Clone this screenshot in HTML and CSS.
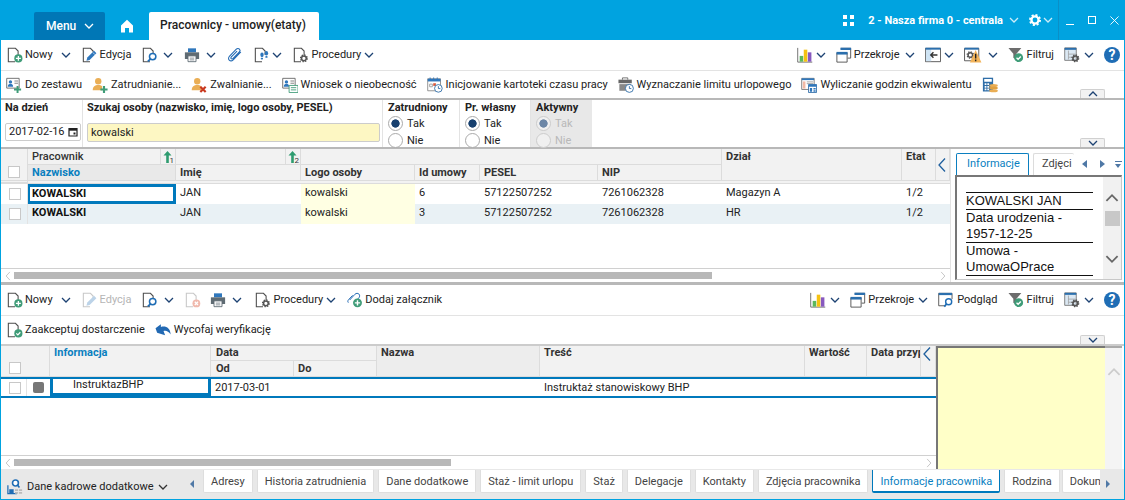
FILE: index.html
```html
<!DOCTYPE html>
<html lang="pl">
<head>
<meta charset="utf-8">
<title>Pracownicy - umowy(etaty)</title>
<link rel="stylesheet" href="styles.css">
</head>
<body>
<svg class="defs" width="0" height="0" aria-hidden="true">
  <symbol id="page" viewBox="0 0 18 18"><path d="M9 16.5H1.5V1.5H9.5L12.5 4.5V9" fill="#fff" stroke="#4d4d4d" stroke-width="1.2"/></symbol>
  <symbol id="gear" viewBox="0 0 18 18"><circle cx="9" cy="9" r="6.4" fill="none" stroke="currentColor" stroke-width="2.6" stroke-dasharray="2.6 2.4"/><circle cx="9" cy="9" r="4.6" fill="none" stroke="currentColor" stroke-width="3"/></symbol>
  <symbol id="i-new" viewBox="0 0 18 18"><use href="#page"/><circle cx="12.8" cy="12.8" r="4.6" fill="#3f9c78"/><path d="M12.8 10v5.6M10 12.8h5.6" stroke="#fff" stroke-width="1.5"/></symbol>
  <symbol id="i-newoff" viewBox="0 0 18 18"><path d="M9 16.5H1.5V1.5H9.5L12.5 4.5V9" fill="#fff" stroke="#c8c8c8" stroke-width="1.2"/><circle cx="12.8" cy="12.8" r="4.4" fill="#f0b9ad"/><path d="M11 11l3.6 3.6M14.6 11L11 14.6" stroke="#fff" stroke-width="1.4"/></symbol>
  <symbol id="i-edit" viewBox="0 0 18 18"><use href="#page"/><path d="M5 15.5l1-3.6 7.6-7.6 2.6 2.6-7.6 7.6z" fill="#2f77bc"/><path d="M12 6l2.6 2.6" stroke="#fff" stroke-width=".7"/></symbol>
  <symbol id="i-editoff" viewBox="0 0 18 18"><path d="M9 16.5H1.5V1.5H9.5L12.5 4.5V9" fill="#fff" stroke="#c8c8c8" stroke-width="1.2"/><path d="M5 15.5l1-3.6 7.6-7.6 2.6 2.6-7.6 7.6z" fill="#bcd3e8"/></symbol>
  <symbol id="i-search" viewBox="0 0 18 18"><use href="#page"/><circle cx="12" cy="10.8" r="3.6" fill="#fff" stroke="#1f6db5" stroke-width="1.7"/><path d="M9.6 13.4L6.6 16.2" stroke="#1f6db5" stroke-width="2"/></symbol>
  <symbol id="i-print" viewBox="0 0 18 18"><path d="M4.5 1.5h9V6h-9z" fill="#2f77bc"/><path d="M1 6h16v7.5H1z" fill="#5f6b73"/><path d="M4.5 10h9v6.5h-9z" fill="#fff" stroke="#5f6b73"/><path d="M6.5 12.5h5M6.5 14.5h5" stroke="#5f6b73" stroke-width=".8"/></symbol>
  <symbol id="i-clip" viewBox="0 0 18 18"><path d="M15.6 5.4L7 14.4c-1.4 1.4-3.4 1.4-4.5.3s-1-3.1.4-4.5l7.6-7.8c1-1 2.6-1 3.5-.1s.9 2.3-.1 3.3L6.6 13c-.6.6-1.4.6-1.9.1s-.4-1.3.2-1.9l6.4-6.6" fill="none" stroke="#2269b3" stroke-width="1.2"/></symbol>
  <symbol id="i-foot" viewBox="0 0 18 18"><use href="#page"/><ellipse cx="9" cy="8.8" rx="1.9" ry="2.6" fill="#2f77bc"/><rect x="7.6" y="12" width="2.6" height="2" rx="1" fill="#2f77bc"/><ellipse cx="14" cy="7" rx="1.9" ry="2.6" fill="#2f77bc"/><rect x="12.7" y="10.2" width="2.6" height="2" rx="1" fill="#2f77bc"/></symbol>
  <symbol id="i-proc" viewBox="0 0 18 18"><use href="#page"/><use href="#gear" x="7" y="7.5" width="10.5" height="10.5" color="#555"/></symbol>
  <symbol id="i-chart" viewBox="0 0 18 18"><path d="M.8 1v16h16.4" fill="none" stroke="#666"/><path d="M3 10h4v6.5H3z" fill="#5cb85c"/><path d="M7.6 3h4v13.5h-4z" fill="#f5c211"/><path d="M12.2 6h4v10.5h-4z" fill="#8759bf"/></symbol>
  <symbol id="i-cube" viewBox="0 0 18 18"><path d="M5.5 1.5h11v11H13" fill="none" stroke="#4d4d4d"/><path d="M5 .8h12v2.6H5z" fill="#2b6fad"/><path d="M1 6.5h11.5V17H1z" fill="#fff" stroke="#4d4d4d"/><path d="M.6 5.5H13v3H.6z" fill="#2b6fad"/></symbol>
  <symbol id="i-back" viewBox="0 0 18 18"><path d="M.5 1.5h17v15H.5z" fill="#fff" stroke="#4d4d4d"/><path d="M1 2h6v14H1z" fill="#cfe4f4"/><path d="M.5 .8h17V3H.5z" fill="#2b6fad"/><path d="M14 9H6.5M9.5 6l-3 3 3 3" fill="none" stroke="#333" stroke-width="1.6"/></symbol>
  <symbol id="i-warn" viewBox="0 0 20 18"><path d="M.5 1.5h16v14H.5z" fill="#fff" stroke="#4d4d4d"/><path d="M.5 .8h16V3H.5z" fill="#2b6fad"/><use href="#gear" x="2" y="4" width="10" height="10" color="#555"/><path d="M13 3.5l6.5 14h-13z" fill="#f3b45a"/><path d="M13 7.5V13M13 14v2" stroke="#222" stroke-width="1.6"/></symbol>
  <symbol id="i-filter" viewBox="0 0 18 18"><path d="M.5 1H15L9.5 7.500v7L6 12V7.500z" fill="#6d6d6d"/><circle cx="12" cy="12" r="5" fill="#3f9c78"/><path d="M9.600 12l1.800 1.800 3-3.200" fill="none" stroke="#fff" stroke-width="1.500"/></symbol>
  <symbol id="i-set" viewBox="0 0 18 18"><path d="M.8 1h13v14H.8z" fill="#dbe8f3" stroke="#777"/><path d="M.8 1h13v2.200H.8z" fill="#2b6fad"/><path d="M5 4v10M5 8h8M5 11.500h8" stroke="#999" stroke-width=".8"/><use href="#gear" x="7.500" y="7.500" width="10.500" height="10.500" color="#555"/></symbol>
  <symbol id="i-card" viewBox="0 0 18 18"><path d="M.8 1.500h14v11H.8z" fill="#fff" stroke="#666"/><circle cx="5" cy="5.500" r="1.900" fill="#2f77bc"/><path d="M2 11c0-2.600 1.300-3.400 3-3.400S8 8.400 8 11z" fill="#2f77bc"/><path d="M9.500 4.500h4M9.500 7h4" stroke="#777"/></symbol>
  <symbol id="i-cardadd" viewBox="0 0 18 18"><use href="#i-card"/><path d="M13 10v8M9 14h8" stroke="#3f9c78" stroke-width="2.200"/></symbol>
  <symbol id="i-cardform" viewBox="0 0 18 18"><use href="#i-card"/><path d="M8 9.500h10v8H8z" fill="#fff" stroke="#3f9c78"/><path d="M10 12h6M10 14.500h6" stroke="#3f9c78"/></symbol>
  <symbol id="i-pers" viewBox="0 0 18 18"><circle cx="7" cy="4.800" r="3.600" fill="#eaae55"/><path d="M.8 15c0-4.500 2.600-6 6.200-6 2 0 3.400.4 4.400 1.300V15z" fill="#eaae55"/></symbol>
  <symbol id="i-persadd" viewBox="0 0 18 18"><use href="#i-pers"/><path d="M13.500 10v8M9.500 14h8" stroke="#3f9c78" stroke-width="2.400"/></symbol>
  <symbol id="i-persdel" viewBox="0 0 18 18"><use href="#i-pers"/><path d="M10.500 11l6 6M16.500 11l-6 6" stroke="#c9391f" stroke-width="2.400"/></symbol>
  <symbol id="i-cal" viewBox="0 0 18 18"><path d="M.8 2h14.400v13.500H.8z" fill="#fff" stroke="#888"/><path d="M.8 2h14.400v3H.8z" fill="#2f77bc"/><path d="M3.500 .5v3M7.500 .5v3M11.500 .5v3" stroke="#2f77bc"/><path d="M3 8h3v3H3z" fill="none" stroke="#999"/><path d="M7 7h3v3H7z" fill="#d9593d"/><circle cx="12.800" cy="12.800" r="4.300" fill="#fff" stroke="#2f6ea8"/><path d="M12.800 10.300v2.700h2.200" fill="none" stroke="#2f6ea8"/></symbol>
  <symbol id="i-case" viewBox="0 0 18 18"><path d="M5 3V1h6v2" fill="none" stroke="#666"/><path d="M.5 3h15v4H.5z" fill="#666"/><path d="M1.500 8h13v7.500h-13z" fill="#888"/><circle cx="12.800" cy="12.800" r="4.500" fill="#fff" stroke="#2f6ea8"/><path d="M12.800 10.300v2.700h2.200" fill="none" stroke="#2f6ea8"/></symbol>
  <symbol id="i-tabcalc" viewBox="0 0 18 18"><path d="M.8 1.500h14v12.500H.8z" fill="#fff" stroke="#777"/><path d="M.8 1.500h14v2H.8z" fill="#2f77bc"/><path d="M2 5h3v8H2z" fill="#f2b9a5"/><path d="M6.500 5.500h7M6.500 7.500h7" stroke="#999"/><path d="M8.500 8.500h9v9h-9z" fill="#fff" stroke="#2f6ea8"/><path d="M8.500 8.500h9v2.500h-9zM10 12.500h2.500v4H10zM14 12.500h2.500v1.500H14zM14 15h2.500v1.500H14z" fill="#2f77bc"/></symbol>
  <symbol id="i-calccoin" viewBox="0 0 18 18"><path d="M1 .8h11.500v15.500H1z" fill="#2f6ea8"/><path d="M2.500 2.300h8.500v3H2.500zM3 7h2v2H3zM6 7h2v2H6zM3 10h2v2H3zM6 10h2v2H6zM3 13h2v2H3zM6 13h2v2H6z" fill="#fff"/><ellipse cx="13" cy="9.500" rx="4.800" ry="1.700" fill="#eaae55"/><ellipse cx="13" cy="12.500" rx="4.800" ry="1.700" fill="#e0a040"/><ellipse cx="13" cy="15.500" rx="4.800" ry="1.700" fill="#eaae55"/></symbol>
  <symbol id="i-accept" viewBox="0 0 18 18"><use href="#page"/><circle cx="12.800" cy="12.800" r="4.600" fill="#3f9c78"/><path d="M10.500 12.800l1.700 1.700 2.800-3" fill="none" stroke="#fff" stroke-width="1.400"/></symbol>
  <symbol id="i-undo" viewBox="0 0 18 18"><path d="M.6 7l6-4.500v3c5.500-1.500 10.500.9 11 8.500-2.300-3.700-5.300-4.700-8-3.900l1.800 4.900-9-3z" fill="#2269b3"/></symbol>
  <symbol id="i-attach" viewBox="0 0 18 18"><path d="M3 9l6-6.500c1.300-1.300 3.300-1.300 4.400-.2s1.100 2.900 0 4.200L10 10" fill="none" stroke="#2269b3" stroke-width="1.100"/><path d="M1.500 12c-.9-1-.7-2.300.3-3.400l4.500-4.800" fill="none" stroke="#2269b3" stroke-width="1.100"/><circle cx="11.800" cy="12.200" r="5" fill="#3f9c78"/><path d="M11.800 9.200v6M8.800 12.200h6" stroke="#fff" stroke-width="1.600"/></symbol>
  <symbol id="i-preview" viewBox="0 0 18 18"><path d="M9 15.500H.8V1.500h15V8" fill="#fff" stroke="#4d4d4d"/><path d="M.8 1h15v2.500H.8z" fill="#2b6fad"/><circle cx="12" cy="11" r="3.400" fill="#fff" stroke="#1f6db5" stroke-width="1.600"/><path d="M9.600 13.500L7 16.500" stroke="#1f6db5" stroke-width="2"/></symbol>
  <symbol id="i-kad" viewBox="0 0 18 18"><path d="M1 7v9.500h10" fill="none" stroke="#1f6db5" stroke-width="1.400"/><path d="M2.500 11.500h5v5h-5z" fill="#1f6db5"/><circle cx="9.500" cy="4.500" r="3.300" fill="#fff" stroke="#1f6db5" stroke-width="1.800"/><path d="M12 7l2 2.500" stroke="#1f6db5" stroke-width="1.800"/><path d="M9 11.500h3.500v2H9zM13.500 11.500H17v2h-3.500zM9 14.500h3.500v2H9zM13.500 14.500H17v2h-3.500z" fill="#bbb"/></symbol>
  <symbol id="chev" viewBox="0 0 10 10"><path d="M1 3l4 4 4-4" fill="none" stroke="currentColor" stroke-width="1.300"/></symbol>
  <symbol id="chevl" viewBox="0 0 10 16"><path d="M8 1.500L2 8l6 6.500" fill="none" stroke="currentColor" stroke-width="1.300"/></symbol>
  <symbol id="sort" viewBox="0 0 14 14"><path d="M4.500 1L.5 5.500h2.700V13h2.600V5.500h2.700z" fill="#2f9c70"/></symbol>
  <symbol id="home" viewBox="0 0 14 14"><path d="M7 .8L1 6.500v7h4V9h4v4.500h4v-7z" fill="#fff"/></symbol>
</svg>

<div class="app">
  <header class="title">
    <button class="menu">Menu <svg class="c10 wh"><use href="#chev"/></svg></button>
    <span class="homeb"><svg class="i14"><use href="#home"/></svg></span>
    <div class="maintab">Pracownicy - umowy(etaty)</div>
    <div class="tright">
      <span class="squares"><i></i><i></i><i></i><i></i></span>
      <span class="company">2 - Nasza firma 0 - centrala</span>
      <svg class="c10 wh thin"><use href="#chev"/></svg>
      <svg class="i14 whgear"><use href="#gear"/></svg>
      <svg class="c10 wh thin"><use href="#chev"/></svg>
      <span class="winbtns">
        <span class="wmin"></span>
        <span class="wmax"></span>
        <svg class="wclose" viewBox="0 0 10 10"><path d="M.5 .5l9 9M9.500 .5l-9 9" stroke="#fff"/></svg>
      </span>
    </div>
  </header>

  <main class="body">
    <div class="tb tb1">
      <span class="ti"><svg class="i"><use href="#i-new"/></svg>Nowy<svg class="c10 m6"><use href="#chev"/></svg></span>
      <span class="ti"><svg class="i"><use href="#i-edit"/></svg>Edycja</span>
      <span class="ti"><svg class="i"><use href="#i-search"/></svg><svg class="c10 m3"><use href="#chev"/></svg></span>
      <span class="ti"><svg class="i"><use href="#i-print"/></svg><svg class="c10 m4"><use href="#chev"/></svg></span>
      <span class="ti"><svg class="i"><use href="#i-clip"/></svg></span>
      <span class="ti"><svg class="i"><use href="#i-foot"/></svg><svg class="c10 m0"><use href="#chev"/></svg></span>
      <span class="ti"><svg class="i"><use href="#i-proc"/></svg>Procedury<svg class="c10 m1"><use href="#chev"/></svg></span>
      <span class="spacer"></span>
      <span class="ti"><svg class="i"><use href="#i-chart"/></svg><svg class="c10 m1"><use href="#chev"/></svg></span>
      <span class="ti"><svg class="i"><use href="#i-cube"/></svg>Przekroje<svg class="c10 m3"><use href="#chev"/></svg></span>
      <span class="ti"><svg class="i"><use href="#i-back"/></svg><svg class="c10 m1"><use href="#chev"/></svg></span>
      <span class="ti"><svg class="i iw"><use href="#i-warn"/></svg><svg class="c10 m4"><use href="#chev"/></svg></span>
      <span class="ti g3"><svg class="i"><use href="#i-filter"/></svg>Filtruj</span>
      <span class="ti"><svg class="i"><use href="#i-set"/></svg><svg class="c10 m2"><use href="#chev"/></svg></span>
      <span class="help">?</span>
    </div>

    <div class="tb tb2">
      <span class="ti ts"><svg class="i"><use href="#i-cardadd"/></svg>Do zestawu</span>
      <span class="ti ts"><svg class="i"><use href="#i-persadd"/></svg>Zatrudnianie...</span>
      <span class="ti ts"><svg class="i"><use href="#i-persdel"/></svg>Zwalnianie...</span>
      <span class="ti ts"><svg class="i"><use href="#i-cardform"/></svg>Wniosek o nieobecność</span>
      <span class="ti ts"><svg class="i"><use href="#i-cal"/></svg>Inicjowanie kartoteki czasu pracy</span>
      <span class="ti ts"><svg class="i"><use href="#i-case"/></svg>Wyznaczanie limitu urlopowego</span>
      <span class="ti ts"><svg class="i"><use href="#i-tabcalc"/></svg>Wyliczanie godzin ekwiwalentu</span>
      <span class="ti ts"><svg class="i"><use href="#i-calccoin"/></svg></span>
      <span class="collapse up"><svg class="c10"><use href="#chev"/></svg></span>
    </div>

    <section class="filter">
      <div class="fc fdate">
        <label class="fl">Na dzień</label>
        <div class="date">2017-02-16<svg class="calic" viewBox="0 0 10 10"><path d="M1 1.500h8v7.500H1z" fill="none" stroke="#222" stroke-width="1.200"/><path d="M1 1.500h8v2.200H1z" fill="#222"/><path d="M5.500 5.500h2v2h-2z" fill="#222"/></svg></div>
      </div>
      <div class="fc fsearch">
        <label class="fl">Szukaj osoby (nazwisko, imię, logo osoby, PESEL)</label>
        <div class="search">kowalski</div>
      </div>
      <div class="fc fr fr1">
        <label class="fl">Zatrudniony</label>
        <span class="rad on">Tak</span>
        <span class="rad">Nie</span>
      </div>
      <div class="fc fr fr2">
        <label class="fl">Pr. własny</label>
        <span class="rad on">Tak</span>
        <span class="rad">Nie</span>
      </div>
      <div class="fc fr fr3">
        <label class="fl">Aktywny</label>
        <span class="rad on dis">Tak</span>
        <span class="rad dis">Nie</span>
      </div>
      <span class="collapse down"><svg class="c10"><use href="#chev"/></svg></span>
    </section>

    <section class="split split1">
      <div class="gridwrap">
        <div class="grid g1 ghead">
          <div class="hc sel1"><span class="cb"></span></div>
          <div class="hc grp">Pracownik<span class="sortb"><svg class="i14"><use href="#sort"/></svg><sub>1</sub></span></div>
          <div class="hc grp"><span class="sortb"><svg class="i14"><use href="#sort"/></svg><sub>2</sub></span></div>
          <div class="hc grp sp4"></div>
          <div class="hc tall hd8">Dział</div>
          <div class="hc tall hd9">Etat</div>
          <div class="hc tall hd10 chl"><svg class="ch16"><use href="#chevl"/></svg></div>
          <div class="hc active">Nazwisko</div>
          <div class="hc">Imię</div>
          <div class="hc">Logo osoby</div>
          <div class="hc">Id umowy</div>
          <div class="hc">PESEL</div>
          <div class="hc">NIP</div>
          <div class="hc"></div>
        </div>
        <div class="grid g1 row">
          <div class="dc cbc"><span class="cb"></span></div>
          <div class="dc cur b">KOWALSKI</div>
          <div class="dc">JAN</div>
          <div class="dc logo">kowalski</div>
          <div class="dc">6</div>
          <div class="dc">57122507252</div>
          <div class="dc">7261062328</div>
          <div class="dc">Magazyn A</div>
          <div class="dc">1/2</div>
          <div class="dc"></div>
        </div>
        <div class="grid g1 row alt">
          <div class="dc cbc"><span class="cb"></span></div>
          <div class="dc b">KOWALSKI</div>
          <div class="dc">JAN</div>
          <div class="dc logo">kowalski</div>
          <div class="dc">3</div>
          <div class="dc">57122507252</div>
          <div class="dc">7261062328</div>
          <div class="dc">HR</div>
          <div class="dc">1/2</div>
          <div class="dc"></div>
        </div>
        <div class="fill"></div>
        <div class="hs"><svg class="hsa"><use href="#chevl"/></svg><span class="thumb th1"></span><svg class="hsa hsr"><use href="#chevl"/></svg></div>
      </div>
      <aside class="side">
        <div class="stabs">
          <span class="stab on">Informacje</span>
          <span class="stab clip">Zdjęci</span>
          <span class="tri l"></span>
          <span class="tri r"></span>
          <span class="tmenu"></span>
        </div>
        <div class="sbox">
          <div class="html">
            <p>KOWALSKI JAN</p>
            <p>Data urodzenia - 1957-12-25</p>
            <p>Umowa - UmowaOPrace</p>
          </div>
          <div class="vs"><svg class="vsa"><use href="#chev"/></svg><span class="vthumb"></span><svg class="vsa vsd"><use href="#chev"/></svg></div>
        </div>
      </aside>
    </section>

    <div class="sizer"></div>

    <div class="tb tb1 tbl">
      <span class="ti"><svg class="i"><use href="#i-new"/></svg>Nowy<svg class="c10 m6"><use href="#chev"/></svg></span>
      <span class="ti off"><svg class="i"><use href="#i-editoff"/></svg>Edycja</span>
      <span class="ti"><svg class="i"><use href="#i-search"/></svg><svg class="c10 m4"><use href="#chev"/></svg></span>
      <span class="ti mr9"><svg class="i"><use href="#i-newoff"/></svg></span>
      <span class="ti mr13"><svg class="i"><use href="#i-print"/></svg><svg class="c10 m4"><use href="#chev"/></svg></span>
      <span class="ti"><svg class="i"><use href="#i-proc"/></svg>Procedury<svg class="c10 m1"><use href="#chev"/></svg></span>
      <span class="ti"><svg class="i"><use href="#i-attach"/></svg>Dodaj załącznik</span>
      <span class="spacer"></span>
      <span class="ti"><svg class="i"><use href="#i-chart"/></svg><svg class="c10 m2"><use href="#chev"/></svg></span>
      <span class="ti"><svg class="i"><use href="#i-cube"/></svg>Przekroje<svg class="c10 m2"><use href="#chev"/></svg></span>
      <span class="ti g3"><svg class="i"><use href="#i-preview"/></svg>Podgląd</span>
      <span class="ti g3"><svg class="i"><use href="#i-filter"/></svg>Filtruj</span>
      <span class="ti"><svg class="i"><use href="#i-set"/></svg><svg class="c10 m2"><use href="#chev"/></svg></span>
      <span class="help">?</span>
    </div>

    <div class="tb tb3">
      <span class="ti ts"><svg class="i"><use href="#i-accept"/></svg>Zaakceptuj dostarczenie</span>
      <span class="ti ts"><svg class="i"><use href="#i-undo"/></svg>Wycofaj weryfikację</span>
      <span class="collapse down"><svg class="c10"><use href="#chev"/></svg></span>
    </div>

    <section class="split split2">
      <div class="gridwrap">
        <div class="grid g2 ghead2">
          <div class="hc tall h2a"><span class="cb"></span></div>
          <div class="hc tall active2">Informacja</div>
          <div class="hc h2data d5">Data</div>
          <div class="hc tall shade">Nazwa</div>
          <div class="hc tall">Treść</div>
          <div class="hc tall">Wartość</div>
          <div class="hc tall">Data przyp</div>
          <div class="hc tall chl"><svg class="ch16"><use href="#chevl"/></svg></div>
          <div class="hc d5">Od</div>
          <div class="hc">Do</div>
        </div>
        <div class="grid g2 row2">
          <div class="dc cbc"><span class="cb"></span></div>
          <div class="dc sq"><i></i></div>
          <div class="dc cur2"><span>InstruktazBHP</span></div>
          <div class="dc d5">2017-03-01</div>
          <div class="dc"></div>
          <div class="dc"></div>
          <div class="dc">Instruktaż stanowiskowy BHP</div>
          <div class="dc"></div>
          <div class="dc"></div>
          <div class="dc"></div>
        </div>
        <div class="fill"></div>
        <div class="hs"><svg class="hsa"><use href="#chevl"/></svg><span class="thumb th2"></span><svg class="hsa hsr"><use href="#chevl"/></svg></div>
      </div>
      <aside class="note">
        <div class="yellow"></div>
        <div class="vs vs2"><svg class="vsa"><use href="#chev"/></svg></div>
      </aside>
    </section>

    <nav class="btabs">
      <span class="view"><svg class="i"><use href="#i-kad"/></svg>Dane kadrowe dodatkowe<svg class="c10 dark"><use href="#chev"/></svg></span>
      <span class="btri l"></span>
      <div class="btablist">
        <span class="btab">Adresy</span>
        <span class="btab">Historia zatrudnienia</span>
        <span class="btab">Dane dodatkowe</span>
        <span class="btab">Staż - limit urlopu</span>
        <span class="btab">Staż</span>
        <span class="btab">Delegacje</span>
        <span class="btab">Kontakty</span>
        <span class="btab">Zdjęcia pracownika</span>
        <span class="btab on">Informacje pracownika</span>
        <span class="btab">Rodzina</span>
        <span class="btab last">Dokum</span>
      </div>
      <span class="btri r"></span>
    </nav>
  </main>
</div>
</body>
</html>
```

FILE: styles.css
```css
* { box-sizing: border-box; }
html, body { margin: 0; padding: 0; height: 500px; overflow: hidden; }
body { font: 11px/14px Roboto, "Liberation Sans", sans-serif; color: #222; background: #fff; }
.defs { position: absolute; }
svg { display: block; flex: none; }
.app { width: 1125px; height: 500px; display: flex; flex-direction: column; }

/* title bar */
.title { height: 40px; background: #00a3e0; display: flex; align-items: flex-end; padding-left: 34px; color: #fff; flex: none; }
.menu { width: 71px; height: 28px; background: #0077b6; border: 0; border-radius: 2px 2px 0 0; color: #fff; font: 500 12px Roboto, sans-serif; display: flex; align-items: center; padding: 0 0 0 12px; gap: 8px; }
.c10 { width: 10px; height: 10px; color: #1d4273; }
.m0 { margin-left: 0; }
.m1 { margin-left: 1px; }
.m2 { margin-left: 2px; }
.m3 { margin-left: 3px; }
.m4 { margin-left: 4px; }
.m6 { margin-left: 6px; }
.c10.wh { color: #fff; margin: 0; }
.c10.dark { color: #333; margin-left: 0; }
.thin { opacity: .8; }
.i14 { width: 14px; height: 14px; }
.homeb { width: 44px; height: 28px; display: flex; align-items: center; justify-content: center; }
.maintab { width: 170px; height: 28px; background: #fff; color: #222; font: 500 12px/27px Roboto, sans-serif; padding-left: 11px; border-radius: 2px 2px 0 0; }
.tright { margin-left: auto; height: 40px; display: flex; align-items: center; }
.squares { display: grid; grid-template-columns: 4px 4px; gap: 3px; margin-right: 14px; }
.squares i { display: block; width: 4px; height: 4px; background: #fff; }
.company { font: 700 11px Roboto, sans-serif; margin-right: 6px; }
.whgear { color: #fff; margin-left: 9px; margin-right: 1px; }
.winbtns { width: 67px; height: 40px; margin-left: 5px; border-left: 1px solid #0b8fc7; display: flex; align-items: center; position: relative; }
.wmin { width: 8px; height: 1px; background: #fff; margin: 8px 0 0 7px; }
.wmax { width: 8px; height: 8px; border: 1px solid #fff; margin-left: 14px; }
.wclose { width: 9px; height: 9px; margin-left: 14px; }

/* body */
.body { flex: 1; display: flex; flex-direction: column; min-height: 0; border: 1px solid #00a3e0; border-top: 0; }
.tb { display: flex; align-items: center; padding-left: 6px; flex: none; position: relative; white-space: nowrap; }
.tb1 { height: 31px; border-bottom: 1px solid #e3e3e3; padding-right: 4px; }
.tb2 { height: 27px; padding: 1px 0 0 5px; }
.tb3 { height: 28px; }
.ti { display: flex; align-items: center; gap: 2px; margin-right: 11px; }
.ti.g3 { gap: 3px; }
.ti.ts { margin-right: 10px; gap: 3px; }
.tb3 .ti.ts:first-child { gap: 2px; }
.spacer ~ .ti { margin-right: 10px; }
.mr9 { margin-right: 9px; }
.mr13 { margin-right: 13px; }
.ti.off { color: #b5b5b5; }
.i { width: 16px; height: 16px; }
.iw { width: 18px; }
.spacer { flex: 1; }
.help { width: 16px; height: 16px; border-radius: 50%; background: #1f6db5; color: #fff; font: 700 14px/16px Roboto, sans-serif; text-align: center; flex: none; }
.collapse { position: absolute; right: 19px; width: 25px; height: 9px; background: #f2f2f2; border: 1px solid #d0d0d0; border-bottom: 0; border-radius: 2px 2px 0 0; display: flex; justify-content: center; align-items: center; }
.collapse.up { bottom: 0; }
.collapse.up .c10 { transform: rotate(180deg); }
.collapse.down { bottom: 0; }

/* filter */
.filter { height: 51px; border-top: 2px solid #b8b8b8; border-bottom: 2px solid #b8b8b8; display: flex; position: relative; flex: none; }
.fc { border-right: 1px solid #e3e3e3; padding: 1px 0 0 4px; display: flex; flex-direction: column; }
.fl { font-weight: 700; height: 21px; line-height: 14px; white-space: nowrap; }
.fdate { width: 82px; }
.fsearch { width: 300px; }
.fr1 { width: 77px; }
.fr2 { width: 71px; }
.fr3 { width: 61px; background: #e8e8e8; border: 0; }
.fr { padding-left: 5px; }
.fr .fl { height: 14px; }
.date { width: 76px; height: 18px; border: 1px solid #ccc; border-radius: 2px; display: flex; align-items: center; padding-left: 3px; gap: 3px; margin-top: 1px; font-size: 11px; white-space: nowrap; }
.calic { width: 10px; height: 10px; }
.search { width: 293px; height: 19px; background: #fdf7c3; border: 1px solid #ccc; border-radius: 2px; padding-left: 3px; line-height: 17px; margin-top: 1px; }
.rad { height: 17px; flex: none; display: flex; align-items: center; gap: 4px; }
.rad::before { content: ""; width: 13px; height: 13px; border: 1px solid #aaa; border-radius: 50%; background: #fff; flex: none; }
.rad.on::before { background: radial-gradient(circle, #17406f 3.8px, #fff 4.5px); }
.rad.dis { color: #b8b8b8; }
.rad.dis::before { border-color: #ccc; background: #f0f0f0; }
.rad.on.dis::before { background: radial-gradient(circle, #6c86a6 3.8px, #f0f0f0 4.5px); }

/* split regions */
.split { display: flex; flex: none; }
.split1 { height: 133px; }
.split2 { height: 125px; border-top: 2px solid #ccc; }
.gridwrap { display: flex; flex-direction: column; min-width: 0; }
.split1 .gridwrap { width: 949px; }
.split2 .gridwrap { width: 935px; }
.sizer { height: 3px; background: #b8b8b8; flex: none; }
.grid { display: grid; }
.g1 { grid-template-columns: 27px 148px 125px 114px 65px 118px 124px 180px 34px 14px; }
.g2 { grid-template-columns: 26px 23px 161px 83px 83px 163px 265px 62px 54px 15px; }
.ghead { grid-template-rows: 16px 16px; background: #f2f2f2; border-bottom: 1px solid #dcdcdc; }
.hc { background: #f2f2f2; border-right: 1px solid #dcdcdc; border-bottom: 1px solid #dcdcdc; font-weight: 700; padding: 1px 0 0 4px; color: #333; line-height: 14px; white-space: nowrap; overflow: hidden; position: relative; }
.hc.grp { font-weight: 500; }
.sel1 { grid-row: span 2; padding: 0; display: flex; align-items: flex-end; justify-content: center; padding-bottom: 2px; }
.sp4 { grid-column: span 4; }
.tall { grid-row: span 2; }
.hd8, .hd9, .hd10 { grid-row: 1 / span 2; }
.hd8 { grid-column: 8; }
.hd9 { grid-column: 9; }
.hd10 { grid-column: 10; }
.chl { padding: 8px 0 0 1px; color: #1f5f9e; }
.ch16 { width: 10px; height: 16px; color: #1f5f9e; }
.active { background: #e9e9e9; color: #0a7fbf; }
.active2 { background: #f2f2f2; color: #0a7fbf; }
.d5 { padding-left: 5px; }
.sortb { position: absolute; right: 0; top: 0; width: 15px; height: 16px; border-left: 1px solid #dcdcdc; padding: 1px 0 0 2px; }
.sortb sub { position: absolute; right: 1px; bottom: 0; font: 400 8px/8px Roboto, sans-serif; }
.cb { display: block; width: 12px; height: 12px; border: 1px solid #c8c8c8; background: #fff; }
.row { height: 20px; }
.dc { line-height: 18px; padding-left: 4px; white-space: nowrap; overflow: hidden; }
.cbc { padding: 4px 0 0 8px; border-right: 1px solid #e3e3e3; }
.b { font-weight: 700; color: #111; }
.cur { border: 3px solid #0079bc; border-left-width: 2px; padding-left: 2px; line-height: 13px; }
.logo { background: #ffffe3; }
.alt { background: #e9f1f5; }
.fill { flex: 1; }
.hs { height: 14px; border-top: 1px solid #d0d0d0; display: flex; align-items: center; position: relative; flex: none; }
.hsa { width: 8px; height: 10px; margin-left: 3px; color: #bbb; }
.hsr { position: absolute; right: 3px; transform: rotate(180deg); }
.thumb { height: 7px; background: #b8b8b8; margin-left: 2px; }
.th1 { width: 698px; }
.th2 { width: 437px; }

/* side */
.side { flex: 1; display: flex; flex-direction: column; padding: 4px 2px 2px 4px; min-width: 0; border-left: 1px solid #e3e3e3; }
.stabs { height: 22px; display: flex; align-items: flex-end; padding-left: 1px; position: relative; flex: none; }
.stab { height: 22px; line-height: 20px; border: 1px solid #dcdcdc; border-bottom: 0; padding: 0 5px; margin-right: 4px; border-radius: 2px 2px 0 0; color: #444; white-space: nowrap; }
.stab.on { border-color: #0b7fc0; color: #0a7fbf; width: 73px; padding-left: 10px; }
.stab.clip { width: 41px; border-right: 0; padding-left: 8px; padding-right: 0; }
.tri { width: 0; height: 0; border-style: solid; position: absolute; top: 7px; }
.tri.l { left: 127px; border-width: 4px 5px 4px 0; border-color: transparent #4f78a6 transparent transparent; }
.tri.r { left: 145px; border-width: 4px 0 4px 5px; border-color: transparent transparent transparent #4f78a6; }
.tmenu { position: absolute; left: 160px; top: 8px; width: 7px; height: 7px; border-top: 1px solid #4f78a6; }
.tmenu::after { content: ""; position: absolute; left: 0; top: 2px; border-style: solid; border-width: 4px 3.5px 0; border-color: #4f78a6 transparent transparent; }
.sbox { flex: 1; display: flex; border: 1px solid #c8c8c8; border-top: 2px solid #777; border-left: 2px solid #777; min-height: 0; overflow: hidden; }
.html { flex: 1; padding: 15px 10px 0 9px; font: 13px/16px "Liberation Sans", Arial, sans-serif; color: #111; min-width: 0; }
.html p { margin: 0; border-top: 1px solid #111; }
.html p:last-child { border-bottom: 1px solid #111; }
.vs { width: 18px; background: #f1f1f1; position: relative; flex: none; padding-top: 14px; }
.vsa { width: 14px; height: 14px; margin: 0 auto; color: #666; transform: rotate(180deg); }
.vthumb { display: block; width: 15px; height: 15px; background: #c8c8c8; margin: 6px auto 0; }
.vsd { position: absolute; left: 2px; top: 75px; transform: none; }

/* lower */
.h2a { grid-column: 1 / span 2; padding: 0 0 2px 8px; display: flex; align-items: flex-end; }
.h2data { grid-column: 4 / span 2; }
.ghead2 { grid-template-rows: 15px 16px; }
.ghead2 .hc { padding-top: 0; }
.ghead2 .hc:nth-child(n+9) { grid-row: 2; padding-top: 1px; }
.ghead2 .hc:nth-child(9) { grid-column: 4; }
.ghead2 .hc:nth-child(10) { grid-column: 5; }
.shade { background: #ededed; }
.row2 { border-top: 2px solid #0079bc; border-bottom: 2px solid #0079bc; height: 21px; }
.row2 .dc { line-height: 18px; }
.row2 .cbc { padding-top: 3px; }
.sq { padding: 3px 0 0 6px; }
.sq i { display: block; width: 11px; height: 11px; background: #777; border-radius: 2px; }
.row2 .cur2 { border: 3px solid #0079bc; border-top: 0; padding-left: 20px; overflow: visible; }
.cur2 span { display: block; line-height: 11px; }
.note { flex: 1; display: flex; min-width: 0; padding-right: 2px; }
.yellow { flex: 1; background: #ffffc8; border-left: 2px solid #777; border-top: 2px solid #777; }
.vs2 { width: 17px; background: #f4f4f4; border-top: 2px solid #aaa; padding-top: 17px; }
.vs2 .vsa { color: #ccc; }

/* bottom tabs */
.btabs { flex: 1; background: #e8e8e8; display: flex; align-items: flex-start; position: relative; min-width: 0; }
.view { display: flex; align-items: center; gap: 4px; padding: 10px 0 0 6px; width: 185px; }
.btri { width: 0; height: 0; border-style: solid; flex: none; margin-top: 11px; }
.btri.l { border-width: 4px 4px 4px 0; border-color: transparent #4f78a6 transparent transparent; margin: 11px 9px 0 4px; }
.btri.r { border-width: 4px 0 4px 4px; border-color: transparent transparent transparent #4f78a6; margin-left: 6px; }
.btablist { width: 897px; display: flex; gap: 4px; overflow: hidden; padding-top: 1px; height: 26px; }
.btab { flex: none; height: 23px; background: #fff; border: 1px solid #dedede; border-top: 0; border-radius: 0 0 2px 2px; padding: 0 7px; line-height: 24px; color: #444; }
.btab.on { color: #0a7fbf; border-bottom: 2px solid #0079bc; border-left-color: #0079bc; border-right-color: #0079bc; }
.btab.last { border-right: 0; padding-right: 0; margin-left: -2px; }
```
